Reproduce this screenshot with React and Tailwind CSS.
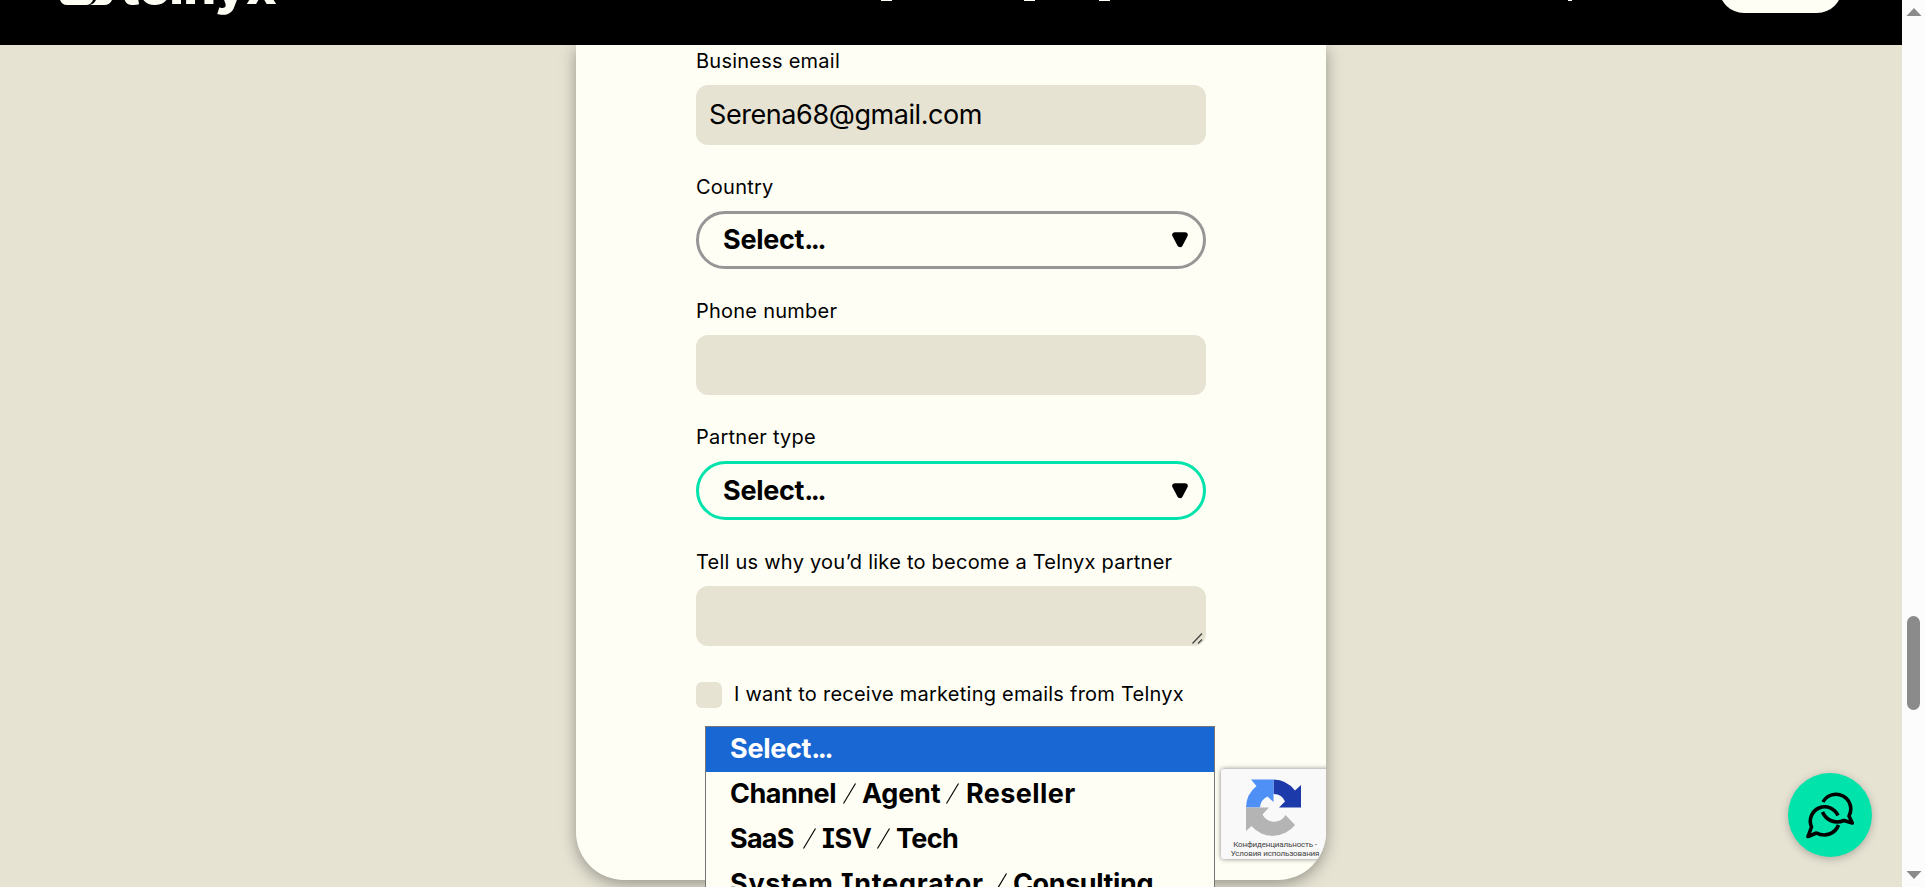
import React from "react";

const labelCls = "h-6 text-[20px] leading-6 tracking-[0.24px] whitespace-nowrap";

function Triangle() {
  return (
    <svg width="16" height="16" viewBox="0 0 16 16">
      <path d="M3 3H13L8 12.400Z" fill="#000" stroke="#000" strokeWidth="5.600" strokeLinejoin="round" />
    </svg>
  );
}

function Placeholder() {
  return (
    <span className="tracking-[-0.3px]">
      Select<span className="tracking-[-2.3px]">...</span>
    </span>
  );
}

function SelectBox({ className }) {
  return (
    <div className={"flex items-center justify-between rounded-full border-[3px] pl-6 pr-[15px] " + className}>
      <span className="text-[27px] leading-8 font-bold">
        <Placeholder />
      </span>
      <Triangle />
    </div>
  );
}

function Slash() {
  return (
    <svg width="13" height="21" viewBox="0 0 13 21" className="mr-[6px] shrink-0">
      <path d="M0.500 20.500L12.500 0.500" stroke="#000" strokeWidth="1.200" />
    </svg>
  );
}

function Option({ children, className = "" }) {
  return (
    <div className={"flex h-[45px] shrink-0 items-center pl-[24px] pb-[2px] text-[27px] leading-[40px] font-bold whitespace-nowrap [font-feature-settings:'cv08'] " + className}>
      {children}
    </div>
  );
}

function Recaptcha() {
  return (
    <div className="absolute left-[645px] top-[724px] flex h-[90px] w-[256px] flex-col rounded-[3px] bg-[#f9f9f9] shadow-[0_0_5px_gray]">
      <svg width="60" height="60" viewBox="0 0 60 60" className="ml-[23px] mt-[9px] shrink-0">
        <path d="M57 7V29.500H35L41 23.500A12 12 0 0 0 29.500 16V1.500A28 28 0 0 1 51 12.500Z" fill="#1c3aa9" />
        <path d="M7 1.500H29.500V24L23.500 18.500A13 13 0 0 0 16 29.500H2A28 28 0 0 1 12.500 8Z" fill="#4f90f7" />
        <path d="M2 53V29.500H25L18.500 36.500A13 13 0 0 0 41.500 37L51 47A28 28 0 0 1 7.500 48Z" fill="#b4b4b4" />
      </svg>
      <div className="flex w-[108px] flex-col items-center font-['Roboto','Open_Sans',sans-serif] text-[8px] leading-[9px] text-[#444] whitespace-nowrap">
        <div className="mt-[2px] tracking-[-0.15px]">Конфиденциальность -</div>
        <div className="tracking-[-0.15px]">Условия использования</div>
      </div>
    </div>
  );
}

export default function App() {
  return (
    <div className="flex h-[887px] w-[1925px] overflow-hidden bg-[#e6e3d3] font-['Inter','Liberation_Sans',sans-serif] text-black">
      <div className="relative flex w-[1902px] flex-col">
        <header className="relative z-10 h-[45px] shrink-0 overflow-hidden bg-black">
          <svg width="52" height="6" viewBox="0 0 52 6" className="absolute left-[60px] top-0">
            <path d="M0 0H33Q31 5 26 5H7Q2 5 0 0ZM36 0H52Q50 5 44 5H30Q34 4 36 0Z" fill="#fffef5" />
          </svg>
          <span className="absolute left-[120px] top-[-47px] text-[52px] leading-[66px] font-extrabold tracking-[-0.7px] text-[#fffef5]">telnyx</span>
          <i className="absolute left-[881px] top-0 h-px w-[11px] bg-[#fffef5]" />
          <i className="absolute left-[1024px] top-0 h-px w-[11px] bg-[#fffef5]" />
          <i className="absolute left-[1099px] top-0 h-px w-[11px] bg-[#fffef5]" />
          <i className="absolute left-[1568px] top-0 h-px w-[4px] bg-[#fffef5]" />
          <div className="absolute left-[1719px] top-[-37px] h-[50px] w-[123px] rounded-[25px] bg-[#fffef5]" />
        </header>

        <main className="relative mx-auto h-[835px] w-[750px] shrink-0 rounded-b-[48px] bg-[#fffef5] px-[120px] pt-1 shadow-[0_4px_16px_rgba(0,0,0,0.35)]">
          <div className="absolute inset-0 overflow-hidden rounded-b-[48px]">
            <Recaptcha />
          </div>
          <label className={"mb-3 block " + labelCls}>Business email</label>
          <div className="mb-[30px] flex h-[60px] items-center rounded-[12px] bg-[#e6e3d3] px-[13px] text-[27px] tracking-[-0.42px]">Serena68@gmail.com</div>
          <label className={"mb-3 block " + labelCls}>Country</label>
          <SelectBox className="mb-[30px] h-[58px] border-[#969696]" />
          <label className={"mb-3 block " + labelCls}>Phone number</label>
          <div className="mb-[30px] h-[60px] rounded-[12px] bg-[#e6e3d3]" />
          <label className={"mb-3 block " + labelCls}>Partner type</label>
          <SelectBox className="mb-[30px] h-[59px] border-[#00e3aa]" />
          <label className={"mb-3 block " + labelCls}>Tell us why you’d like to become a Telnyx partner</label>
          <div className="mb-9 flex h-[60px] items-end justify-end rounded-[12px] bg-[#e6e3d3] pr-[3px] pb-[2px]">
            <svg width="11" height="11" viewBox="0 0 11 11"><path d="M0.500 10.500L10 0.500M6 10.500L10 6.500" stroke="#444" strokeWidth="1.300" /></svg>
          </div>
          <div className="flex items-center gap-3">
            <div className="size-[26px] rounded-[6px] bg-[#e6e3d3]" />
            <span className={"-mt-[2px] " + labelCls}>I want to receive marketing emails from Telnyx</span>
          </div>
        </main>

        <div className="absolute left-[705px] top-[726px] z-20 flex h-[220px] w-[510px] flex-col border border-[#767676] bg-[#fffef5]">
          <Option className="bg-[#1967d2] text-white">
            <Placeholder />
          </Option>
          <Option>
            <span className="w-[113px] tracking-[-0.5px]">Channel</span>
            <Slash />
            <span className="w-[84px] tracking-[-0.2px]">Agent</span>
            <Slash />
            <span className="ml-px tracking-[0.4px]">Reseller</span>
          </Option>
          <Option>
            <span className="w-[73px] tracking-[-0.8px]">SaaS</span>
            <Slash />
            <span className="w-[55px] tracking-[-0.4px]">ISV</span>
            <Slash />
            <span className="tracking-[-0.6px]">Tech</span>
          </Option>
          <Option>
            <span className="w-[264px] tracking-[0.7px]">System Integrator</span>
            <Slash />
            <span className="tracking-[-0.4px]">Consulting</span>
          </Option>
        </div>

        <button className="absolute left-[1788px] top-[773px] flex size-[84px] items-center justify-center rounded-full bg-[#00e3aa] shadow-[0_2px_8px_rgba(0,0,0,0.25)]">
          <svg width="48" height="48" viewBox="0 0 48 48" fill="none" stroke="#000" strokeWidth="3.600" strokeLinejoin="round">
            <path d="M17 11A14.500 14.500 0 1 1 43 25L46.300 32L38 29.500C29 33.500 20 29 16.500 21" />
            <path d="M32 24.500A14.300 14.300 0 1 0 5.500 36L2 45.500L10.500 42C19 46.500 29 43 32.500 34" />
          </svg>
        </button>
      </div>

      <aside className="flex w-[23px] flex-col items-center bg-[#fcfcfc]">
        <svg width="16" height="8" viewBox="0 0 16 8" className="mt-2"><path d="M8 0L15.500 8H0.500Z" fill="#8b8b8b" /></svg>
        <div className="mt-[600px] h-[94px] w-[13px] rounded-full bg-[#8b8b8b]" />
        <svg width="16" height="8" viewBox="0 0 16 8" className="mt-auto mb-2"><path d="M0.500 0H15.500L8 8Z" fill="#8b8b8b" /></svg>
      </aside>
    </div>
  );
}
